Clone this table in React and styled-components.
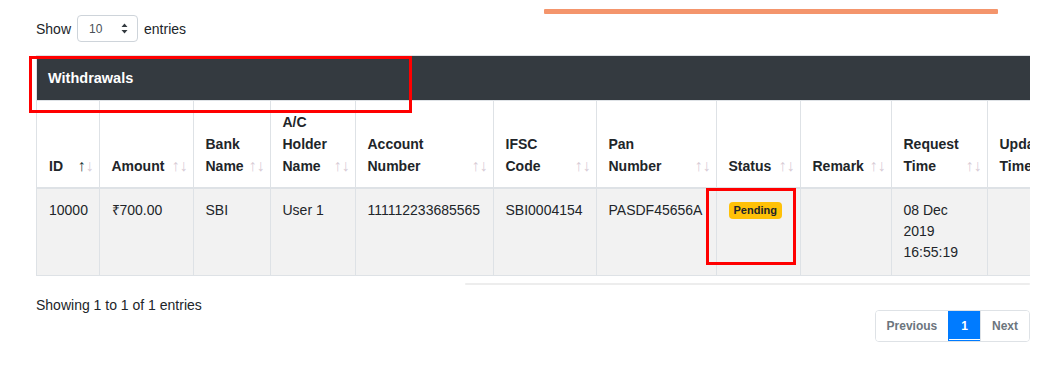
import React from 'react';
import styled, { createGlobalStyle } from 'styled-components';

const GlobalStyle = createGlobalStyle`
  html, body {
    margin: 0;
    padding: 0;
    background: #fff;
  }
  body {
    font-family: "Liberation Sans", Arial, sans-serif;
    font-size: 14px;
    color: #212529;
  }
`;

const columns = [
  { key: 'id', label: ['ID'], width: 62, active: true },
  { key: 'amount', label: ['Amount'], width: 94 },
  { key: 'bank', label: ['Bank', 'Name'], width: 77 },
  { key: 'holder', label: ['A/C', 'Holder', 'Name'], width: 85 },
  { key: 'account', label: ['Account', 'Number'], width: 138 },
  { key: 'ifsc', label: ['IFSC', 'Code'], width: 103 },
  { key: 'pan', label: ['Pan', 'Number'], width: 120 },
  { key: 'status', label: ['Status'], width: 84 },
  { key: 'remark', label: ['Remark'], width: 91 },
  { key: 'request', label: ['Request', 'Time'], width: 96 },
  { key: 'updated', label: ['Updated', 'Time'], width: 110 },
];

const rows = [
  {
    id: '10000',
    amount: '₹700.00',
    bank: 'SBI',
    holder: 'User 1',
    account: '111112233685565',
    ifsc: 'SBI0004154',
    pan: 'PASDF45656A',
    status: 'Pending',
    remark: '',
    request: '08 Dec 2019 16:55:19',
    updated: '',
  },
];

const Page = styled.div`
  position: relative;
  width: 1055px;
  box-sizing: border-box;
  padding: 9px 25px 0 36px;
`;

const TopBar = styled.div`
  display: flex;
  align-items: flex-start;
  height: 46px;
`;

const LengthControl = styled.label`
  display: flex;
  align-items: center;
  gap: 6px;
  margin-top: 6px;
  font-size: 14px;
`;

const SelectBox = styled.div`
  width: 61px;
  height: 27px;
  box-sizing: border-box;
  border: 1px solid #ced4da;
  border-radius: 4px;
  display: flex;
  align-items: center;
  justify-content: space-between;
  padding: 0 9px 0 11px;
  font-size: 12px;
  color: #495057;
  background: #fff;
`;

const ProgressLine = styled.div`
  width: 454px;
  height: 5px;
  margin-left: auto;
  margin-right: 32px;
  background: #f4956c;
  border-radius: 1px;
`;

const TableFrame = styled.div`
  width: 994px;
  overflow: hidden;
  border-top: 1px solid #dee2e6;
  border-left: 1px solid #dee2e6;
  box-sizing: border-box;
`;

const Caption = styled.div`
  height: 44px;
  background: #343a40;
  color: #fff;
  font-weight: bold;
  font-size: 14.5px;
  display: flex;
  align-items: center;
  padding-left: 11px;
  border-bottom: 1px solid #dee2e6;
`;

const Table = styled.table`
  border-collapse: collapse;
  table-layout: fixed;
  width: ${p => p.$width}px;
`;

const Th = styled.th`
  text-align: left;
  vertical-align: bottom;
  font-weight: bold;
  line-height: 22px;
  padding: 10px 5px 10px 12px;
  border-right: 1px solid #dee2e6;
  border-bottom: 2px solid #dee2e6;
  white-space: nowrap;
`;

const HeadInner = styled.div`
  display: flex;
  align-items: flex-end;
  justify-content: space-between;
`;

const SortIcons = styled.span`
  display: flex;
  font-weight: normal;
  font-size: 16px;
  line-height: 22px;
`;

const Arrow = styled.span`
  color: ${p => (p.$on ? '#1f3b3a' : '#d8ccd6')};
  width: 8px;
  text-align: center;
`;

const Td = styled.td`
  vertical-align: top;
  line-height: 21px;
  padding: 11px 12px 12px 12px;
  background: #f2f2f2;
  border-right: 1px solid #dee2e6;
  border-bottom: 1px solid #dee2e6;
`;

const Badge = styled.span`
  display: inline-block;
  background: #ffc107;
  color: #212529;
  font-weight: bold;
  font-size: 11px;
  line-height: 1;
  padding: 3px 5px 3px;
  border-radius: 4px;
  vertical-align: 1px;
`;

const ScrollTrack = styled.div`
  display: flex;
  justify-content: flex-end;
  width: 994px;
  margin-top: 7px;
`;

const ScrollThumb = styled.div`
  width: 565px;
  height: 2px;
  background: #ededed;
  border-radius: 2px;
`;

const Footer = styled.div`
  display: flex;
  justify-content: space-between;
  width: 994px;
`;

const Info = styled.div`
  font-size: 14px;
  margin-top: 12px;
`;

const Pager = styled.ul`
  list-style: none;
  margin: 25px 0 0;
  padding: 0;
  display: flex;
  height: 32px;
  border: 1px solid #dee2e6;
  border-radius: 4px;
  box-sizing: border-box;
  overflow: hidden;
`;

const PageItem = styled.li`
  display: flex;
  align-items: center;
  padding: 0 ${p => (p.$active ? 12 : 11)}px;
  font-size: 12px;
  font-weight: bold;
  color: ${p => (p.$active ? '#fff' : '#6c757d')};
  background: ${p => (p.$active ? '#007bff' : '#fff')};
  border-left: ${p => (p.$first ? 'none' : '1px solid #dee2e6')};
  border-color: ${p => (p.$active ? '#007bff' : '#dee2e6')};
  box-shadow: ${p => (p.$active ? 'inset 0 -1px 0 #007bff, inset 0 -2px 0 #fff' : 'none')};
`;

const Highlight = styled.div`
  position: absolute;
  border: 3px solid #ff0000;
  box-sizing: border-box;
  pointer-events: none;
`;

const tableWidth = columns.reduce((s, c) => s + c.width, 0);

export default function App() {
  return (
    <Page>
      <GlobalStyle />
      <TopBar>
        <LengthControl>
          Show
          <SelectBox>
            <span>10</span>
            <svg width="7" height="11" viewBox="0 0 7 11">
              <path d="M3.5 0.5 L6.5 4 H0.5 Z M3.5 10.5 L6.5 7 H0.5 Z" fill="#343a40" />
            </svg>
          </SelectBox>
          entries
        </LengthControl>
        <ProgressLine />
      </TopBar>

      <TableFrame>
        <Caption>Withdrawals</Caption>
        <Table $width={tableWidth}>
          <colgroup>
            {columns.map(c => (
              <col key={c.key} style={{ width: c.width }} />
            ))}
          </colgroup>
          <thead>
            <tr>
              {columns.map(c => (
                <Th key={c.key}>
                  <HeadInner>
                    <span>
                      {c.label.map((l, i) => (
                        <React.Fragment key={i}>
                          {i > 0 && <br />}
                          {l}
                        </React.Fragment>
                      ))}
                    </span>
                    <SortIcons>
                      <Arrow $on={c.active}>↑</Arrow>
                      <Arrow>↓</Arrow>
                    </SortIcons>
                  </HeadInner>
                </Th>
              ))}
            </tr>
          </thead>
          <tbody>
            {rows.map(r => (
              <tr key={r.id}>
                {columns.map(c => (
                  <Td key={c.key}>
                    {c.key === 'status' ? <Badge>{r.status}</Badge> : r[c.key]}
                  </Td>
                ))}
              </tr>
            ))}
          </tbody>
        </Table>
      </TableFrame>

      <ScrollTrack>
        <ScrollThumb />
      </ScrollTrack>

      <Footer>
        <Info>Showing 1 to 1 of 1 entries</Info>
        <Pager>
          <PageItem $first>Previous</PageItem>
          <PageItem $active>1</PageItem>
          <PageItem>Next</PageItem>
        </Pager>
      </Footer>

      <Highlight style={{ left: 29, top: 56, width: 383, height: 57 }} />
      <Highlight style={{ left: 706, top: 188, width: 90, height: 77 }} />
    </Page>
  );
}
